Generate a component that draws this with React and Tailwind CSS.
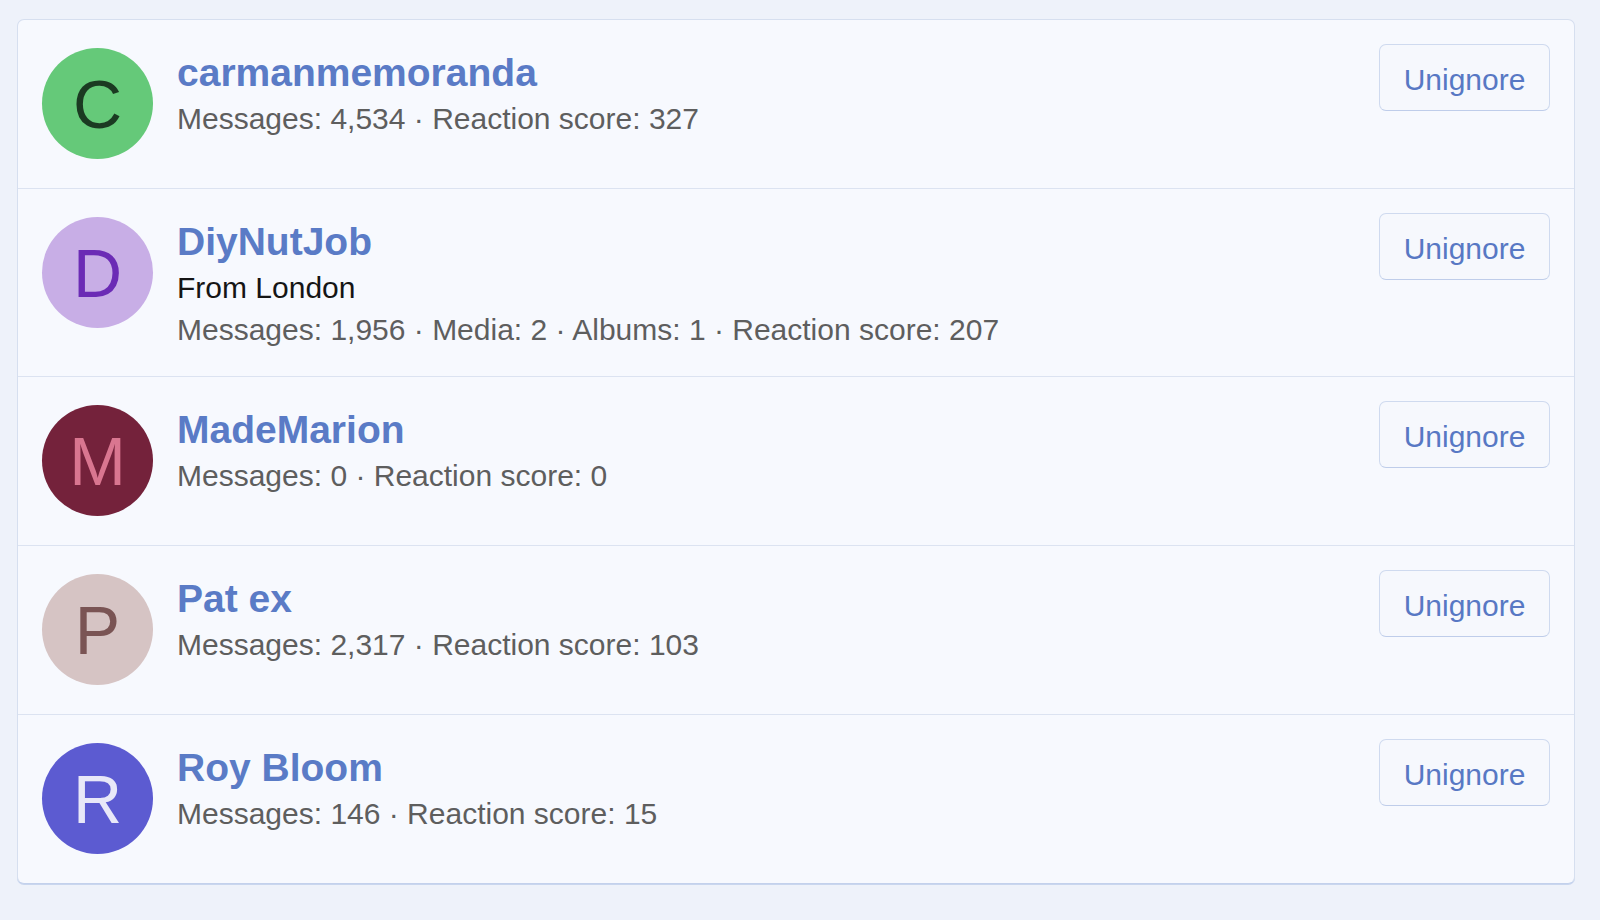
import React from 'react'

const USERS = [
  {
    name: 'carmanmemoranda',
    letter: 'C',
    avatar: 'bg-[#65c979] text-[#1b3a22]',
    stats: 'Messages: 4,534 · Reaction score: 327',
  },
  {
    name: 'DiyNutJob',
    letter: 'D',
    avatar: 'bg-[#c8aee6] text-[#6b2bb5]',
    location: 'From London',
    stats: 'Messages: 1,956 · Media: 2 · Albums: 1 · Reaction score: 207',
  },
  {
    name: 'MadeMarion',
    letter: 'M',
    avatar: 'bg-[#74223b] text-[#d97690]',
    stats: 'Messages: 0 · Reaction score: 0',
  },
  {
    name: 'Pat ex',
    letter: 'P',
    avatar: 'bg-[#d6c4c4] text-[#7a5454]',
    stats: 'Messages: 2,317 · Reaction score: 103',
  },
  {
    name: 'Roy Bloom',
    letter: 'R',
    avatar: 'bg-[#5c5bd1] text-[#e8e8f8]',
    stats: 'Messages: 146 · Reaction score: 15',
  },
]

function Avatar({ letter, className }) {
  return (
    <div className={`w-[111px] h-[111px] shrink-0 rounded-full flex items-center justify-center text-[68px] leading-none ${className}`}>
      {letter}
    </div>
  )
}

function UserRow({ user, last }) {
  return (
    <div className={`flex items-start gap-6 px-6 pt-[28px] pb-[29px] ${last ? '' : 'border-b border-[#dce3f1]'}`}>
      <Avatar letter={user.letter} className={user.avatar} />
      <div className="flex-1 min-w-0 -mb-[4px]">
        <a href="#" className="block text-[39px] leading-[50px] font-bold text-[#5a7bc6]">{user.name}</a>
        {user.location && (
          <div className="text-[30px] leading-[42px] text-[#151515]">{user.location}</div>
        )}
        <div className="text-[30px] leading-[42px] text-[#5e5e5e]">{user.stats}</div>
      </div>
      <button className="-mt-1 w-[171px] h-[67px] pt-[3px] shrink-0 rounded-[7px] border border-[#cfdaef] border-b-[#bfcdea] bg-[#f6f8fd] text-[30px] text-[#5878c4]">
        Unignore
      </button>
    </div>
  )
}

export default function App() {
  return (
    <div className="min-h-[920px] bg-[#eef2fa] pt-[19px] pl-[17px]" style={{ fontFamily: '"Liberation Sans", Arial, sans-serif' }}>
      <div className="w-[1558px] rounded-[7px] border border-[#d6dfef] border-b-[#c3d1ec] bg-[#f7f9fe] shadow-[0_1px_0_#c9d6ee]">
        {USERS.map((u, i) => (
          <UserRow key={u.name} user={u} last={i === USERS.length - 1} />
        ))}
      </div>
    </div>
  )
}
